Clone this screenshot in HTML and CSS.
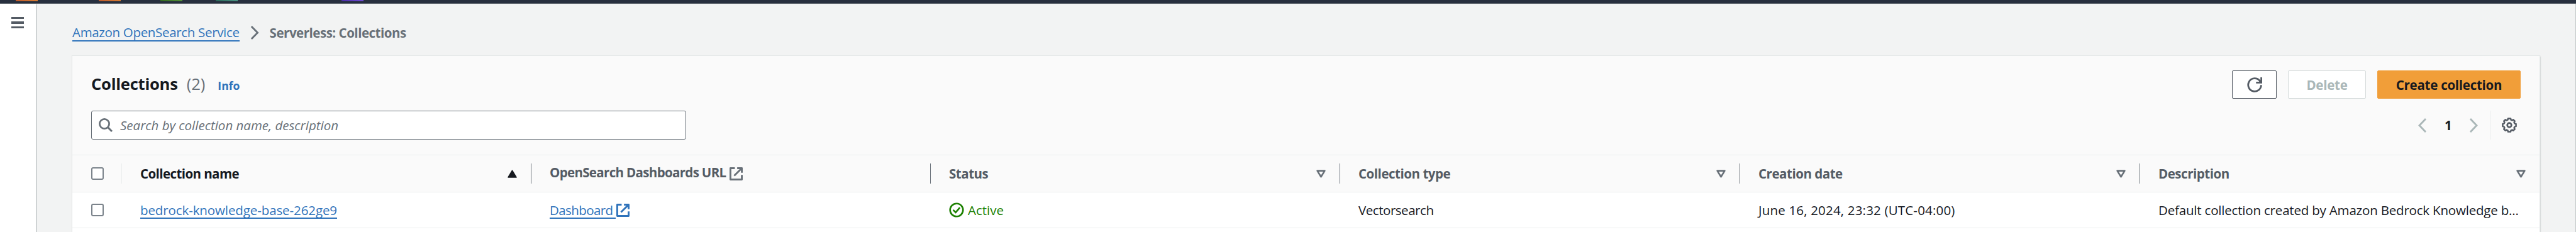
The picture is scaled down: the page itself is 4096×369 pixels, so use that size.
FILE: index.html
```html
<!DOCTYPE html>
<html lang="en">
<head>
<meta charset="utf-8">
<title>Serverless: Collections</title>
<link rel="stylesheet" href="styles.css">
</head>
<body>
<svg class="defs" aria-hidden="true">
  <symbol id="external" viewBox="0 0 20.4 20.4"><path d="M8.2 1.4H1.4v17.6H19v-7M11.800 1.400H19v7.200M19 1.400L7.200 13.200" fill="none" stroke="currentColor" stroke-width="2.800" stroke-linejoin="round"/></symbol>
  <symbol id="sort" viewBox="0 0 15 13"><path d="M1.600 1.600h11.800L7.500 11.200z" fill="none" stroke="currentColor" stroke-width="2.600" stroke-linejoin="round"/></symbol>
</svg>
<header class="topbar">
  <i class="fav orange"></i><i class="fav orange"></i><i class="fav green"></i><i class="fav teal"></i><i class="fav purple"></i>
</header>
<div class="app">
  <nav class="side"><button class="menu" aria-label="Open navigation"><i></i><i></i><i></i></button></nav>
  <main class="main">
    <div class="crumbs">
      <a class="link crumb-link">Amazon OpenSearch Service</a>
      <svg class="crumb-sep" width="14" height="22" viewBox="0 0 14 22"><path d="M1.800 1L11.600 11 1.800 21" fill="none" stroke="#687078" stroke-width="2.800"/></svg>
      <span class="crumb-current">Serverless: Collections</span>
    </div>
    <section class="card">
      <div class="tools">
        <div class="titlebar">
          <h1 class="title">Collections</h1><span class="count">(2)</span><a class="info">Info</a>
          <div class="actions">
            <button class="btn refresh" aria-label="Refresh"><svg width="24" height="24" viewBox="0 0 24 24"><path d="M22.400 12.200A10.300 10.300 0 1 1 20 5.400l1.600 2.800M22.600 0v8.400h-8.300" fill="none" stroke="#545b64" stroke-width="2.800"/></svg></button>
            <button class="btn delete">Delete</button>
            <button class="btn create">Create collection</button>
          </div>
        </div>
        <div class="filterbar">
          <div class="search">
            <svg width="22" height="22" viewBox="0 0 22 22"><circle cx="9" cy="9" r="7.600" fill="none" stroke="#687078" stroke-width="2.800"/><path d="M14.400 14.400l6.600 6.600" stroke="#687078" stroke-width="3"/></svg>
            <span class="placeholder">Search by collection name, description</span>
          </div>
          <div class="pager">
            <svg width="14" height="23" viewBox="0 0 14 23"><path d="M12 1L2 11.500 12 22" fill="none" stroke="#aab7b8" stroke-width="2.800"/></svg>
            <b class="page">1</b>
            <svg width="14" height="23" viewBox="0 0 14 23"><path d="M2 1l10 10.500L2 22" fill="none" stroke="#aab7b8" stroke-width="2.800"/></svg>
            <span class="prefs"><svg width="24" height="24" viewBox="-12 -12 24 24" fill="none" stroke="#545b64"><path d="M-2-10.600H2L2.600-8.400 4.500-7.600 6.300-8.700 8.700-6.300 7.600-4.500 8.400-2.600 10.600-2V2L8.400 2.600 7.600 4.500 8.700 6.300 6.300 8.700 4.500 7.600 2.600 8.400 2 10.600H-2L-2.600 8.400-4.500 7.600-6.300 8.700-8.700 6.300-7.600 4.500-8.400 2.600-10.600 2V-2L-8.400-2.600-7.600-4.500-8.700-6.300-6.300-8.700-4.500-7.600-2.600-8.400z" stroke-width="2.500" stroke-linejoin="round"/><circle r="3.300" stroke-width="2.700"/></svg></span>
          </div>
        </div>
      </div>
      <div class="row head">
        <div class="pick"><i class="check"></i></div>
        <div class="th first"><span class="h-name">Collection name</span><svg class="tri" width="15" height="13" viewBox="0 0 15 13"><path d="M7.500 1.200L14 12H1z" fill="#16191f" stroke="#16191f" stroke-width="1.500" stroke-linejoin="round"/></svg></div>
        <div class="th"><span class="h-url">OpenSearch Dashboards URL</span><svg class="ext muted" width="21" height="21"><use href="#external"/></svg></div>
        <div class="th"><span class="h-type">Status</span><svg class="tri" width="15" height="13"><use href="#sort"/></svg></div>
        <div class="th"><span class="h-type">Collection type</span><svg class="tri" width="15" height="13"><use href="#sort"/></svg></div>
        <div class="th"><span class="h-type">Creation date</span><svg class="tri" width="15" height="13"><use href="#sort"/></svg></div>
        <div class="th"><span class="h-type">Description</span><svg class="tri" width="15" height="13"><use href="#sort"/></svg></div>
      </div>
      <div class="row item">
        <div class="pick"><i class="check"></i></div>
        <div class="td"><a class="link name">bedrock-knowledge-base-262ge9</a></div>
        <div class="td"><a class="link dash">Dashboard</a><svg class="ext blue" width="21" height="21"><use href="#external"/></svg></div>
        <div class="td ok"><svg width="24" height="24" viewBox="0 0 24 24" fill="none" stroke="#1d8102" stroke-width="2.600"><circle cx="12" cy="12" r="10.300"/><path d="M6.600 11.800l4 4 6.600-7.600"/></svg><span>Active</span></div>
        <div class="td vector">Vectorsearch</div>
        <div class="td date">June 16, 2024, 23:32 (UTC-04:00)</div>
        <div class="td desc">Default collection created by Amazon Bedrock Knowledge b...</div>
      </div>
    </section>
  </main>
  <div class="edge"></div>
</div>
</body>
</html>
```
FILE: styles.css
```css
* { box-sizing: border-box; }
body {
  margin: 0;
  height: 369px;
  overflow: hidden;
  display: flex;
  flex-direction: column;
  background: #f2f3f3;
  color: #16191f;
  font: 20.5px/28px "Open Sans", "Noto Sans", sans-serif;
}
.defs { display: none; }
svg { display: block; flex: none; }

.topbar {
  display: flex;
  flex: none;
  height: 6px;
  padding-left: 25px;
  background: #272f3e;
  border-bottom: 1px solid #545b64;
}
.fav { height: 2px; width: 35px; }
.orange { margin-right: 97px; background: linear-gradient(90deg, #bd5a2c, #d67c33); }
.orange + .orange { margin-right: 63px; }
.green { margin-right: 53px; background: linear-gradient(90deg, #346a20, #55903a); }
.teal { margin-right: 165px; background: linear-gradient(90deg, #2b6658, #4b9383); }
.purple { background: linear-gradient(90deg, #4a2ca5, #6f4cd0); }

.app { display: flex; height: 363px; }
.side {
  width: 57px;
  padding: 21px 0 0 18px;
  background: #fff;
  box-shadow: 1px 1px 1px #b4babb;
}
.menu {
  display: flex;
  flex-direction: column;
  gap: 4px;
  width: 20px;
  padding: 0;
  border: 0;
  background: none;
}
.menu i { height: 3.3px; background: #545b64; }
.edge { width: 1px; background: #c3c9c9; }

.main {
  flex: 1;
  display: flex;
  flex-direction: column;
  padding: 32px 57px 0 58px;
}
.crumbs { display: flex; align-items: center; height: 28px; margin-bottom: 23px; }
.link {
  color: #2f73bb;
  border-bottom: 2px solid #2f73bb;
  line-height: 28px;
  height: 28px;
}
.crumb-link { letter-spacing: -.33px; line-height: 27px; }
.crumb-sep { margin: 0 17px 0 17px; }
.crumb-current { color: #687078; font-weight: 700; letter-spacing: -.48px; }

.card {
  flex: 1;
  background: #fff;
  box-shadow: 0 0 1px 1px #e5e8e8, 1px 1px 2px #9da5a6;
}
.tools {
  height: 157px;
  padding: 23px 30px 0;
  background: #fafafa;
}
.titlebar { display: flex; align-items: center; height: 45px; margin-bottom: 19px; }
.title { margin: -2px 0 0; font-size: 25.6px; line-height: 32px; letter-spacing: -.25px; }
.count { margin: -2px 0 0 14px; font-size: 25.6px; color: #687078; }
.info { margin: 3px 0 0 20px; font-size: 17.5px; font-weight: 700; color: #2f73bb; }
.actions { display: flex; gap: 18px; margin-left: auto; }
.btn {
  display: flex;
  align-items: center;
  justify-content: center;
  height: 45px;
  padding: 0;
  border: 1px solid #545b64;
  border-radius: 2px;
  background: #fff;
  color: #16191f;
  font: 700 20.5px/28px "Open Sans", "Noto Sans", sans-serif;
  letter-spacing: -.26px;
}
.refresh { width: 71px; }
.delete { width: 124px; border-color: #d5dbdb; color: #aab7b8; }
.create { width: 228px; border-color: #f19e39; background: #f19e39; }

.filterbar { display: flex; justify-content: space-between; }
.search {
  display: flex;
  align-items: center;
  gap: 12px;
  width: 946px;
  height: 46px;
  padding-left: 11px;
  border: 1px solid #687078;
  border-radius: 3px;
  background: #fff;
}
.placeholder { color: #687078; font-style: italic; }
.pager { display: flex; align-items: center; height: 46px; }
.page { width: 11px; margin: 0 28px; text-align: center; }
.prefs {
  display: flex;
  align-items: center;
  height: 46px;
  margin-left: 19px;
  padding: 0 6px 0 18px;
  border-left: 1px solid #eaeded;
}

.row {
  display: grid;
  grid-template-columns: 78px 651px 635px 651px 636px 636px 1fr;
  align-items: center;
}
.head { height: 60px; background: #fafafa; border: solid #eaeded; border-width: 1px 0; }
.item { height: 57px; border-bottom: 1px solid #eaeded; }
.pick { padding-left: 30px; }
.check {
  display: block;
  width: 20px;
  height: 20px;
  border: 2px solid #7b838b;
  border-radius: 3px;
  background: #fff;
}
.th {
  display: flex;
  align-items: center;
  height: 32px;
  padding: 0 22px 0 29px;
  border-left: 1px solid #687078;
  color: #545b64;
  font-weight: 700;
}
.first { border-color: #eaeded; color: #16191f; }
.tri { margin-left: auto; color: #687078; }
.h-name { letter-spacing: -.58px; }
.h-url { letter-spacing: -.66px; margin-bottom: 4px; }
.h-type { letter-spacing: -.47px; }
.ext { margin-left: 6px; }
.muted { color: #687078; }
.blue { color: #2f73bb; margin-left: 1px; }
.td { display: flex; align-items: center; padding-left: 30px; white-space: nowrap; }
.name { letter-spacing: -.1px; }
.dash { letter-spacing: -.6px; padding-right: 5px; }
.ok { gap: 6px; color: #1d8102; }
.vector { letter-spacing: -.46px; }
.date { letter-spacing: .18px; }
.desc { letter-spacing: -.19px; }
```
